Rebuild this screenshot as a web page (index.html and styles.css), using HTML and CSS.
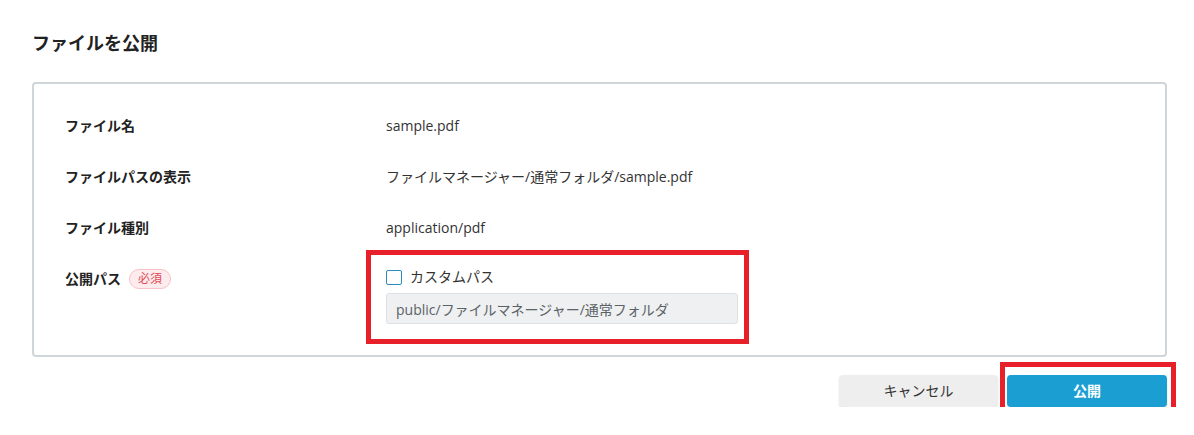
FILE: index.html
```html
<!DOCTYPE html>
<html lang="ja">
<head>
<meta charset="utf-8">
<title>ファイルを公開</title>
<link rel="stylesheet" href="styles.css">
</head>
<body>
<div class="page">
  <h1 class="title">ファイルを公開</h1>
  <div class="card">
    <div class="grid">
      <div class="label">ファイル名</div>
      <div class="value">sample.pdf</div>

      <div class="label">ファイルパスの表示</div>
      <div class="value">ファイルマネージャー/通常フォルダ/sample.pdf</div>

      <div class="label">ファイル種別</div>
      <div class="value">application/pdf</div>

      <div class="label">公開パス <span class="badge">必須</span></div>
      <div class="field">
        <div class="check-row">
          <span class="checkbox"></span>
          <span class="check-text">カスタムパス</span>
        </div>
        <div class="input">public/ファイルマネージャー/通常フォルダ</div>
        <span class="mark mark-field"></span>
      </div>
    </div>
  </div>
  <div class="actions">
    <div class="btn btn-cancel">キャンセル</div>
    <div class="btn btn-primary">公開</div>
    <span class="mark mark-btn"></span>
  </div>
</div>
</body>
</html>
```

FILE: styles.css
```css
*, *::before, *::after { box-sizing: border-box; }

html, body {
  margin: 0;
  padding: 0;
  background: #ffffff;
  overflow: hidden;
}

body {
  font-family: "Open Sans", "Noto Sans CJK JP", sans-serif;
  color: #333333;
  font-size: 14px;
}

.page {
  width: 1194px;
  padding: 30px 27px 0 32px;
}

.title {
  margin: 0;
  font-size: 18px;
  line-height: 26px;
  font-weight: 700;
  color: #222222;
}

.card {
  margin-top: 26px;
  border: 2px solid #cfd6d9;
  border-radius: 4px;
  padding: 32px 31px 31px 31px;
}

.grid {
  display: grid;
  grid-template-columns: 321px 1fr;
  row-gap: 31px;
  align-items: start;
}

.label {
  font-weight: 700;
  line-height: 20px;
  height: 20px;
  color: #222222;
  display: flex;
  align-items: center;
  gap: 8px;
}

.value {
  line-height: 20px;
  color: #333333;
}

.badge {
  display: inline-flex;
  align-items: center;
  justify-content: center;
  width: 42px;
  height: 20px;
  border: 1px solid #f6c2c7;
  background: #fdebed;
  color: #e04b57;
  border-radius: 10px;
  font-size: 12px;
  font-weight: 400;
}

.field {
  position: relative;
  width: 352px;
  display: flex;
  flex-direction: column;
  gap: 8px;
}

.mark {
  position: absolute;
  display: block;
  border: 5px solid #e8202a;
  pointer-events: none;
}

.mark-field {
  left: -20px;
  top: -19px;
  width: 383px;
  height: 94px;
}

.check-row {
  display: flex;
  align-items: center;
  gap: 8px;
  height: 16px;
  line-height: 16px;
  color: #333333;
}

.checkbox {
  width: 16px;
  height: 15px;
  border: 1.5px solid #2a8cc0;
  border-radius: 2px;
  background: #ffffff;
  flex: none;
}

.input {
  height: 31px;
  border: 1px solid #dde1e3;
  background: #eef0f1;
  border-radius: 3px;
  padding: 0 9px;
  display: flex;
  align-items: center;
  color: #5b6266;
}

.actions {
  position: relative;
  margin-top: 18px;
  height: 32px;
  display: flex;
  justify-content: flex-end;
  gap: 9px;
}

.btn {
  height: 32px;
  border-radius: 4px;
  font-size: 14px;
  line-height: 32px;
  text-align: center;
  cursor: pointer;
}

.btn-cancel {
  width: 159px;
  background: #eeeeee;
  color: #333333;
  box-shadow: 0 1px 2px rgba(0, 0, 0, 0.12);
}

.btn-primary {
  width: 160px;
  background: #1b9fd2;
  color: #ffffff;
  font-weight: 700;
  box-shadow: 0 1px 2px rgba(0, 0, 0, 0.15);
}

.mark-btn {
  right: -9px;
  top: -13px;
  width: 176px;
  height: 56px;
}
```
